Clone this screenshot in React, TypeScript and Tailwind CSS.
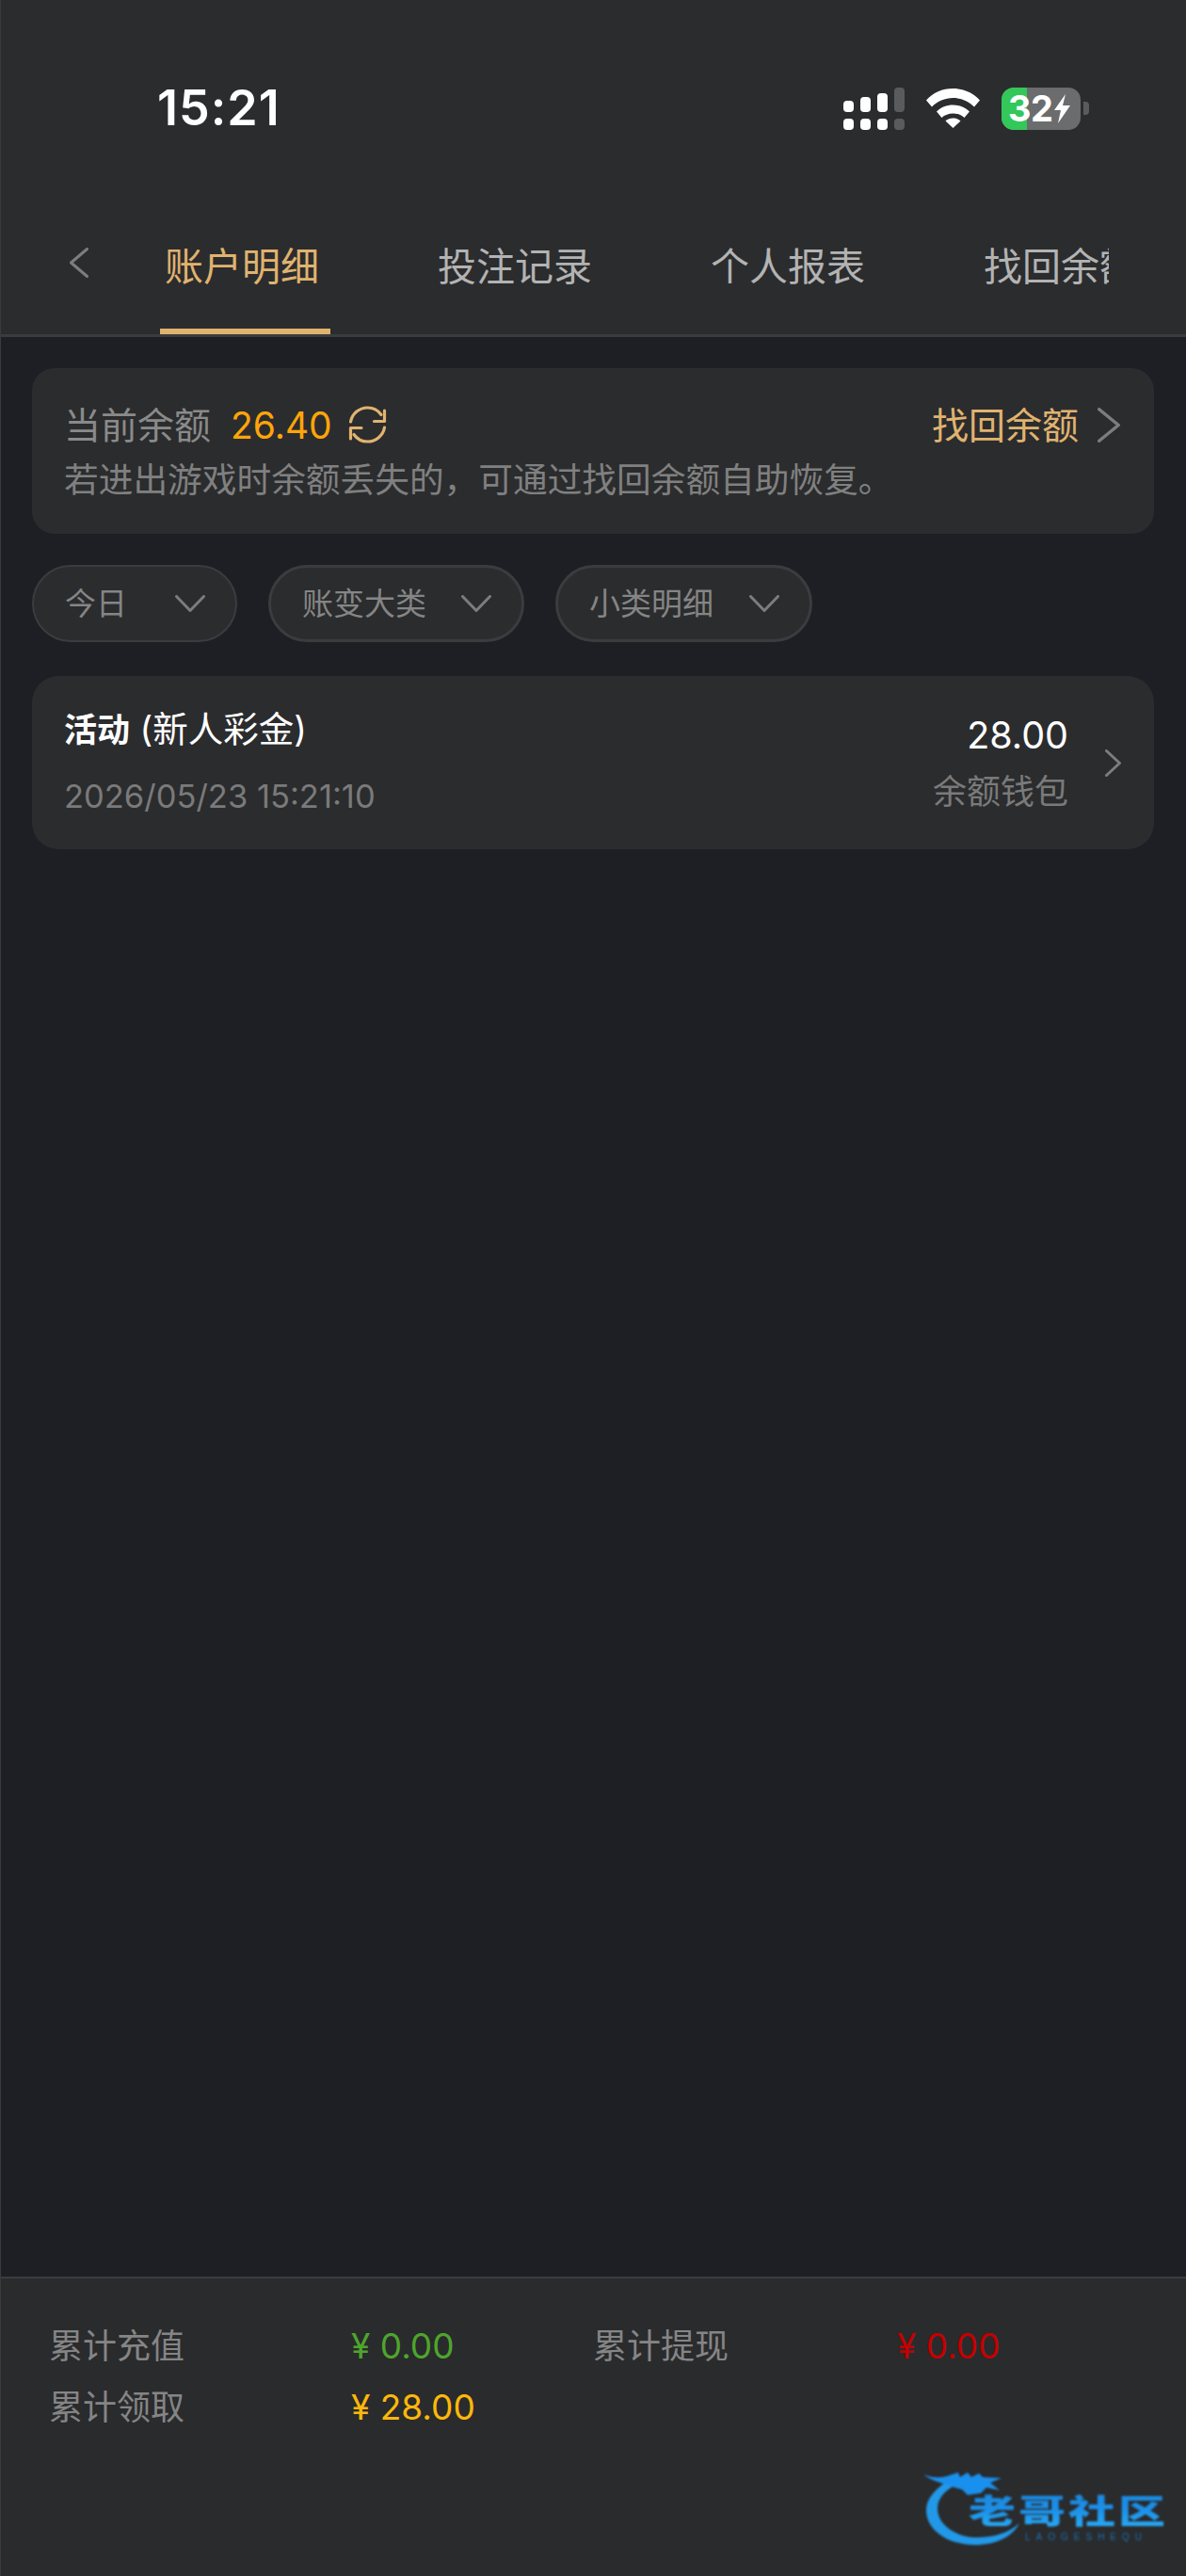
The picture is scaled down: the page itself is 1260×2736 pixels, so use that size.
import React from 'react'

const tabs = ['账户明细', '投注记录', '个人报表', '找回余额']
const filters = [
  { label: '今日', className: 'w-[218px] border-[2px]' },
  { label: '账变大类', className: 'w-[272px] border-[3px]' },
  { label: '小类明细', className: 'w-[273px] border-[3px]' },
]

const SignalIcon = () => (
  <svg width="65" height="45" viewBox="0 0 65 45" fill="#fff">
    <rect x="0" y="14" width="11" height="12" rx="4" />
    <rect x="18" y="10" width="11" height="16" rx="4" />
    <rect x="36" y="6" width="11" height="20" rx="4" />
    <rect x="54" y="0" width="11" height="26" rx="4" fill="#5a5b5d" />
    <rect x="0" y="33" width="11" height="12" rx="4" />
    <rect x="18" y="33" width="11" height="12" rx="4" />
    <rect x="36" y="33" width="11" height="12" rx="4" />
    <rect x="54" y="33" width="11" height="12" rx="4" fill="#5a5b5d" />
  </svg>
)

const WifiIcon = () => (
  <svg width="57" height="42" viewBox="0 0 57 42" fill="#fff">
    <path d="M0 12.5C7 4.5 17 0 28.5 0S50 4.500 57 12.500L51 19.500C45 13.500 37 10 28.500 10S12 13.500 6 19.500Z" />
    <path d="M11 24.500C15.500 20 21.500 17.500 28.500 17.500S41.500 20 46 24.500L40.500 31C37.500 28 33 26.500 28.500 26.500S19.500 28 16.500 31Z" />
    <path d="M20.500 34.500C22.500 32.800 25.500 31.500 28.500 31.500S34.500 32.800 36.500 34.500L28.500 42Z" />
  </svg>
)

const Battery = () => (
  <div className="flex items-center gap-[3px]">
    <div className="relative flex h-[45px] w-[84px] items-center overflow-hidden rounded-[13px] bg-[#6b6c6e]">
      <div className="absolute inset-y-0 left-0 w-[27px] bg-[#34c759]" />
      <span className="relative ml-[7px] text-[38px] leading-none font-bold tracking-[-0.5px] text-white">32</span>
      <svg className="relative" width="20" height="31" viewBox="0 0 20 31" fill="#fff">
        <path d="M14 0 2 17h7L6 31 19 12h-8Z" />
      </svg>
    </div>
    <div className="h-[14px] w-[6px] rounded-r-[4px] bg-[#5a5b5d]" />
  </div>
)

const Chevron = ({
  w,
  h,
  dir,
  stroke = 3.5,
  className = '',
}: {
  w: number
  h: number
  dir: 'left' | 'right' | 'down'
  stroke?: number
  className?: string
}) => {
  const p = stroke / 2
  const points =
    dir === 'right'
      ? `${p},${p} ${w - p},${h / 2} ${p},${h - p}`
      : dir === 'left'
        ? `${w - p},${p} ${p},${h / 2} ${w - p},${h - p}`
        : `${p},${p} ${w / 2},${h - p} ${w - p},${p}`
  return (
    <svg className={`shrink-0 ${className}`} width={w} height={h} viewBox={`0 0 ${w} ${h}`} fill="none">
      <polyline points={points} stroke="#7c7d7f" strokeWidth={stroke} strokeLinecap="round" strokeLinejoin="round" />
    </svg>
  )
}

const RefreshIcon = () => (
  <svg className="ml-[17px] shrink-0" width="41" height="40" viewBox="0 0 41 40" fill="none">
    <g stroke="#e0b36f" strokeWidth="3.200" strokeLinecap="round" strokeLinejoin="round">
      <path d="M2.500 17C4 8.500 11.500 2 20.500 2c6 0 11 2.500 14.500 7.500" />
      <path d="M38.500 23C37 31.500 29.500 38 20.500 38c-6 0-11-2.500-14.500-7.500" />
      <path d="M38.500 5v11.500H27.500" />
      <path d="M2.500 35V23.500h11.500" />
    </g>
  </svg>
)

const Logo = () => (
  <svg
    className="absolute top-[2612px] left-[975px] blur-[0.9px]"
    width="270"
    height="100"
    viewBox="0 0 270 100"
  >
    <defs>
      <linearGradient id="logoText" x1="0" y1="0" x2="0" y2="1">
        <stop offset="0" stopColor="#1a86dc" />
        <stop offset="0.5" stopColor="#1c8fe8" />
        <stop offset="1" stopColor="#2bb0f5" />
      </linearGradient>
    </defs>
    <path
      d="M36 20C18 30 8 42 8 54C8 76 32 91 60 91C82 91 100 82 107 68C96 78 80 83 62 83C40 83 20 70 20 52C20 42 28 32 42 26Z"
      fill="#2299e8"
    />
    <path
      d="M5 16C14 20 22 20 30 18L42 14L44 19L52 14L56 19L64 15L68 19L88 20L76 25L86 33L72 30L66 36L52 38L46 32L38 30C30 26 14 24 5 16Z"
      fill="#1a90ee"
    />
    <g transform="translate(53 68) scale(1 0.7)">
      <text
        x="0"
        y="0"
        fontFamily="'Noto Sans CJK SC', sans-serif"
        fontWeight="900"
        fontSize="50"
        letterSpacing="3"
        fill="url(#logoText)"
      >
        老哥社区
      </text>
    </g>
    <text
      x="113"
      y="86"
      fontFamily="'Liberation Sans', sans-serif"
      fontSize="10"
      letterSpacing="6"
      fill="#1b6fae"
    >
      LAOGESHEQU
    </text>
  </svg>
)

const App: React.FC = () => {
  return (
    <div
      className="relative flex h-[2736px] w-[1260px] flex-col overflow-hidden border-l border-[#3a3b3d] bg-[#1e1f24]"
      style={{ fontFamily: "Inter, 'Noto Sans CJK SC', sans-serif" }}
    >
      {/* Header */}
      <header className="h-[358px] shrink-0 border-b-[3px] border-[#3b3c3e] bg-[#2b2c2e]">
        <div className="h-[92px]" />
        <div className="flex h-[46px] items-center pr-[103px] pl-[166px]">
          <span className="text-[52px] leading-none font-semibold tracking-[1px] text-white">15:21</span>
          <div className="ml-auto flex items-center">
            <SignalIcon />
            <div className="ml-[23px]">
              <WifiIcon />
            </div>
            <div className="ml-[23px]">
              <Battery />
            </div>
          </div>
        </div>
        <div className="mt-[98px] flex h-[119px] items-start">
          <Chevron dir="left" w={20} h={32} stroke={3} className="mt-[27px] ml-[73px]" />
          <div className="ml-[76px] flex h-full w-[1008px] overflow-hidden">
            {tabs.map((tab, i) => (
              <div
                key={tab}
                className={`relative mr-[109px] h-[119px] w-[181px] shrink-0 pt-[18px] pl-[5px] text-[41px] leading-[58px] whitespace-nowrap ${
                  i === 0 ? 'text-[#e0b36f]' : 'text-[#b3b3b3]'
                }`}
              >
                {tab}
                {i === 0 && <div className="absolute inset-x-0 top-[113px] h-[6px] bg-[#e0b36f]" />}
              </div>
            ))}
          </div>
        </div>
      </header>

      {/* Body */}
      <main className="flex-1 pt-[33px] pr-[34px] pl-[33px]">
        <section className="h-[176px] rounded-[24px] bg-[#2b2c2e] pt-[32px] pr-[36px] pl-[34px]">
          <div className="flex h-[56px] items-center">
            <span className="text-[39px] leading-none text-[#8a8a8a]">当前余额</span>
            <span className="ml-[21px] text-[39px] leading-none text-[#ffa50a]">26.40</span>
            <RefreshIcon />
            <span className="ml-auto text-[39px] leading-none text-[#e0b36f]">找回余额</span>
            <Chevron dir="right" w={24} h={37} className="ml-[20px]" />
          </div>
          <p className="mt-[6px] text-[36.700px] leading-[50px] text-[#808080]">
            若进出游戏时余额丢失的，可通过找回余额自助恢复。
          </p>
        </section>

        <div className="mt-[33px] flex gap-[33px]">
          {filters.map((f) => (
            <div
              key={f.label}
              className={`flex h-[82px] items-center justify-between rounded-[41px] border-[#3b3c3e] bg-[#2b2c2e] pr-[32px] pl-[33px] ${f.className}`}
            >
              <span className="text-[33px] leading-none text-[#858585]">{f.label}</span>
              <Chevron dir="down" w={32} h={18} stroke={3} />
            </div>
          ))}
        </div>

        <section className="mt-[36px] flex h-[184px] items-center rounded-[28px] bg-[#2b2c2e] pr-[35px] pl-[34px]">
          <div className="flex flex-col">
            <div className="text-[37.500px] leading-[50px] text-white">
              <span className="text-[35px] font-bold">活动</span> (新人彩金)
            </div>
            <span className="mt-[21px] text-[34.500px] leading-[50px] text-[#7a7a7a]">2026/05/23 15:21:10</span>
          </div>
          <div className="ml-auto flex flex-col items-end">
            <span className="mt-[2px] text-[39.500px] leading-[50px] text-white">28.00</span>
            <span className="mt-[10px] text-[36px] leading-[50px] text-[#7a7a7a]">余额钱包</span>
          </div>
          <Chevron dir="right" w={17} h={29} stroke={3} className="ml-[39px]" />
        </section>
      </main>

      {/* Footer totals */}
      <footer className="h-[318px] shrink-0 border-t-[2px] border-[#3b3c3e] bg-[#2a2b2d] pt-[47px] pl-[51px]">
        <div className="grid grid-cols-[321px_257px_323px_1fr] gap-y-[15px] text-[36px] leading-[50px]">
          <span className="text-[#858585]">累计充值</span>
          <span className="text-[37px] text-[#4ea52c]">¥ 0.00</span>
          <span className="text-[#858585]">累计提现</span>
          <span className="text-[37px] text-[#c40000]">¥ 0.00</span>
          <span className="text-[#858585]">累计领取</span>
          <span className="text-[37px] text-[#fdb80a]">¥ 28.00</span>
        </div>
      </footer>

      <Logo />
    </div>
  )
}

export default App
